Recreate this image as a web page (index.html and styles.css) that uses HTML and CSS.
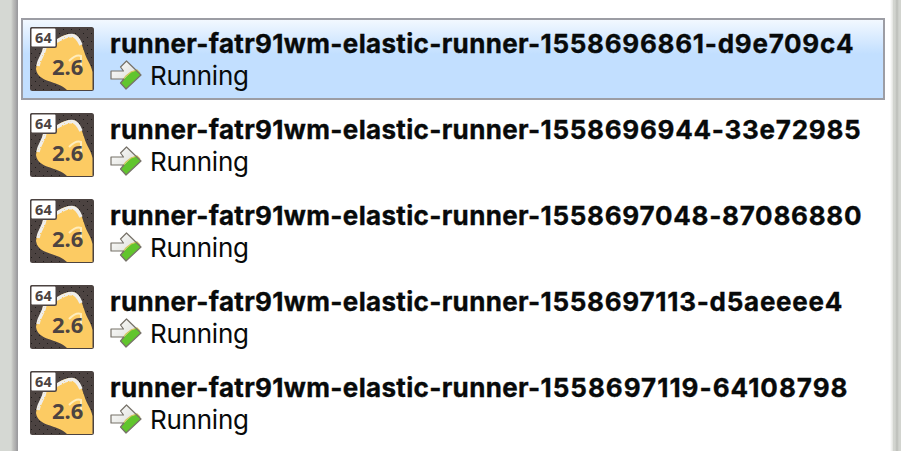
FILE: index.html
```
<!DOCTYPE html>
<html lang="en">
<head>
<meta charset="utf-8">
<title>Virtual machines</title>
<link rel="stylesheet" href="styles.css">
</head>
<body>
<svg class="defs" width="0" height="0" aria-hidden="true">
  <defs>
    <linearGradient id="shine" x1="0" y1="0" x2="1" y2="1"><stop offset="0" stop-color="#fff"/><stop offset="1" stop-color="#d0d2cb"/></linearGradient>
    <pattern id="specks" width="8" height="8" patternUnits="userSpaceOnUse"><path d="M1 2h1v1H1zM5 6h1v1H5z" fill="#000"/></pattern>
    <pattern id="grain" width="4" height="4" patternUnits="userSpaceOnUse"><path d="M0 0h1v1H0zM2 2h1v1H2z" fill="#fccb63"/></pattern>
    <symbol id="os" viewBox="0 0 64 64">
      <rect width="64" height="64" rx="2.5" fill="#4c4341"/>
      <rect x="1" y="1" width="62" height="62" fill="url(#specks)" opacity=".6"/>
      <path d="M6 42C7 33 12 29 13 21L26 14C31 9 35 7 42 7C49 7 51 15 54 24C57 34 61 37 62.500 45V63H37C27 53 8 56 6 42Z" fill="#fccb63"/>
      <path d="M8 39C9 31 14 28 15 20L27 14C32 11 37 8.500 42 8.500C47 9 49 14 51 18" fill="none" stroke="#efeeeb" stroke-width="3.500"/>
      <path d="M9 42C11 32 17 28 17 20L28 16C34 12 38 10 43 11" fill="none" stroke="url(#grain)" stroke-width="4"/>
      <path d="M39 34Q46 27 51 29V41" fill="none" stroke="#ffedbd" stroke-width="2"/>
      <rect x=".75" y=".75" width="25.500" height="19.500" rx="1.500" fill="#fff" stroke="#4c4341" stroke-width="1.500"/>
      <text class="bits" x="5" y="16">64</text>
      <text class="kernel" x="22" y="48">2.6</text>
    </symbol>
    <symbol id="run" viewBox="0 0 32 30">
      <path d="M1 11H13.500L10.500 7L16.500 1L31 15L16 29L10.500 23L14 19H1Z" fill="url(#shine)"/>
      <path d="M29 12L31 15L16 29L10.500 23L16 17L21 12L27 10Z" fill="#61c52d"/>
      <path d="M12 21L16 16L21 12L27 10L30 13" fill="none" stroke="#d3c65c" stroke-width="1.200"/>
      <path d="M1 11H13.500L10.500 7L16.500 1L31 15L16 29L10.500 23L14 19H1Z" fill="none" stroke="#777269" stroke-width="1.200" stroke-linejoin="round"/>
    </symbol>
  </defs>
</svg>
<div class="window">
  <div class="gutter left"></div>
  <main class="list">
    <div class="row selected"><svg class="os"><use href="#os"/></svg><div class="info"><div class="name">runner-fatr91wm-elastic-runner-<span>1558696861-d9e709c4</span></div><div class="state"><svg class="run"><use href="#run"/></svg><span>Running</span></div></div></div>
    <div class="row"><svg class="os"><use href="#os"/></svg><div class="info"><div class="name">runner-fatr91wm-elastic-runner-<span>1558696944-33e72985</span></div><div class="state"><svg class="run"><use href="#run"/></svg><span>Running</span></div></div></div>
    <div class="row"><svg class="os"><use href="#os"/></svg><div class="info"><div class="name">runner-fatr91wm-elastic-runner-<span>1558697048-87086880</span></div><div class="state"><svg class="run"><use href="#run"/></svg><span>Running</span></div></div></div>
    <div class="row"><svg class="os"><use href="#os"/></svg><div class="info"><div class="name">runner-fatr91wm-elastic-runner-<span>1558697113-d5aeeee4</span></div><div class="state"><svg class="run"><use href="#run"/></svg><span>Running</span></div></div></div>
    <div class="row"><svg class="os"><use href="#os"/></svg><div class="info"><div class="name wide">runner-fatr91wm-elastic-runner-<span>1558697119-64108798</span></div><div class="state"><svg class="run"><use href="#run"/></svg><span>Running</span></div></div></div>
  </main>
  <div class="gutter right"></div>
</div>
</body>
</html>
```
FILE: styles.css
```
* { box-sizing: border-box; }
body { margin: 0; background: #fff; color: #080a0a; font-family: Inter, "Liberation Sans", sans-serif; }
.defs { position: absolute; }
.window { display: grid; grid-template-columns: 18px 1fr 11px; height: 451px; overflow: hidden; }
.left { background: linear-gradient(90deg, #d5d8d3 0 11px, #bfc0bd 13px, #a9a9aa 16px, #9c9c9f 17px 18px); }
.right { background: linear-gradient(90deg, #fff 0, #e2e3df 3px, #d2d4cf 3px 5px, #bbbdb8 7px, #d2d4cf 9px); }
.list { display: flex; flex-direction: column; gap: 4px; padding: 18px 5px 0 3px; min-width: 0; }
.row { display: flex; flex: none; gap: 16px; height: 82px; padding: 7px 0 0 7px; border: 2px solid transparent; }
.selected { border-color: #9c9da4; background: linear-gradient(#f2f8ff, #c2dfff 34px); }
.os { flex: none; width: 64px; height: 64px; }
.bits { font: bold 14.5px "Noto Sans", "Open Sans", sans-serif; fill: #4c4341; letter-spacing: 0.3px; }
.kernel { font: bold 22px "Noto Sans", "Open Sans", sans-serif; fill: #4c4341; }
.info { min-width: 0; }
.name { height: 32px; line-height: 34px; font-size: 26px; font-weight: 700; white-space: nowrap; letter-spacing: 0.33px; -webkit-text-stroke: 0.35px #080a0a; }
.name span { letter-spacing: 0.73px; }
.wide span { letter-spacing: 1px; }
.state { display: flex; align-items: center; gap: 8px; height: 32px; font-size: 26px; letter-spacing: -0.25px; }
.state span { line-height: 34px; padding-top: 2px; }
.run { width: 32px; height: 30px; }
```
